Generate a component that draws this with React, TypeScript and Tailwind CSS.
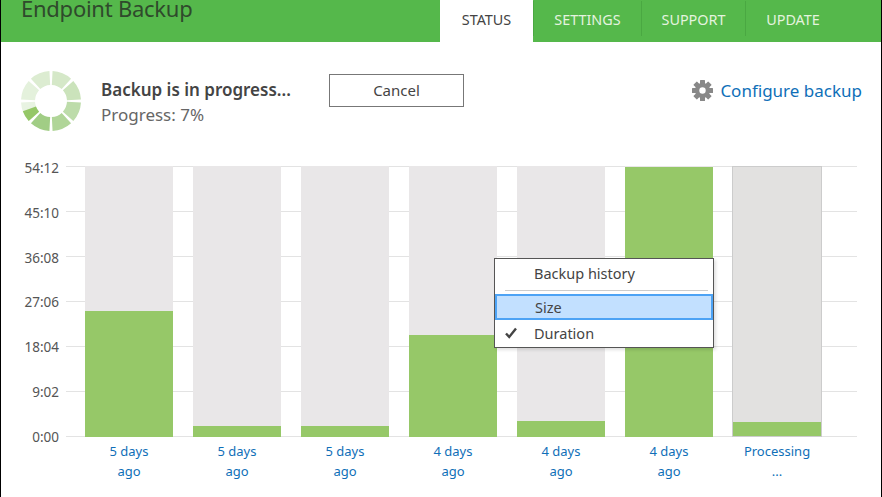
const ticks = ["54:12", "45:10", "36:08", "27:06", "18:04", "9:02", "0:00"];

const bars = [
  { label: ["5 days", "ago"], height: 126 },
  { label: ["5 days", "ago"], height: 11 },
  { label: ["5 days", "ago"], height: 11 },
  { label: ["4 days", "ago"], height: 102 },
  { label: ["4 days", "ago"], height: 16 },
  { label: ["4 days", "ago"], height: 270 },
];

// wedge of the progress ring, angles in degrees clockwise from 12 o'clock
function wedge(a0: number, a1: number, r0: number, r1: number) {
  const pt = (a: number, r: number) => {
    const t = (a * Math.PI) / 180;
    return `${(30 + r * Math.sin(t)).toFixed(2)} ${(30 - r * Math.cos(t)).toFixed(2)}`;
  };
  return `M${pt(a0, r1)} A${r1} ${r1} 0 0 1 ${pt(a1, r1)} L${pt(a1, r0)} A${r0} ${r0} 0 0 0 ${pt(a0, r0)} Z`;
}

const ringColors = ["#d5e8c8", "#cbe3bb", "#bddcaa", "#b0d598", "#a1cd85", "#e8f3e2", "#e4f1dc", "#dcecd1"];

function ProgressRing() {
  return (
    <svg width="60" height="60" viewBox="0 0 60 60" className="shrink-0">
      {ringColors.map((color, i) => (
        <path key={i} d={wedge(i * 45 + 3, (i + 1) * 45 - 3, 16, 30)} fill={color} />
      ))}
      <path d={wedge(225 + 3, 250, 16, 30)} fill="#95c767" />
    </svg>
  );
}

function Gear() {
  return (
    <svg width="21" height="21" viewBox="0 0 21 21" className="shrink-0">
      {[0, 45, 90, 135].map((a) => (
        <rect key={a} x="8" y="0" width="5" height="21" rx="0.5" fill="#888" transform={`rotate(${a} 10.5 10.5)`} />
      ))}
      <circle cx="10.5" cy="10.5" r="7.6" fill="#888" />
      <circle cx="10.5" cy="10.5" r="3.2" fill="#fff" />
    </svg>
  );
}

function Check() {
  return (
    <svg width="12" height="12" viewBox="0 0 12 12" className="absolute left-[10px] top-[7px]">
      <path d="M1 6.5 L4.2 10 L11 1.5" fill="none" stroke="#444" strokeWidth="2.4" />
    </svg>
  );
}

function Tab({ label, width, active }: { label: string; width: string; active?: boolean }) {
  return (
    <div className={`flex h-full items-center justify-center ${width} ${active ? "bg-white text-[#444]" : "text-[#e4f3df]"}`}>
      <span className="pb-[3px] text-[14.4px]">{label}</span>
    </div>
  );
}

export default function App() {
  return (
    <div className="relative h-[497px] w-[882px] overflow-hidden border-x border-black bg-white font-['Noto_Sans',sans-serif] text-[#444]">
      {/* Header */}
      <div className="flex h-[42px] items-start justify-between bg-[#55b84b]">
        <div className="ml-[20px] text-[22px] leading-[17px] tracking-[-0.25px] text-[#2f4a2c]">Endpoint Backup</div>
        <div className="flex h-full">
          <Tab label="STATUS" width="w-[93px]" active />
          <div className="mt-px h-[35px] w-px bg-[#4aa842]" />
          <Tab label="SETTINGS" width="w-[107px]" />
          <div className="mt-px h-[35px] w-px bg-[#4aa842]" />
          <Tab label="SUPPORT" width="w-[103px]" />
          <div className="mt-px h-[35px] w-px bg-[#4aa842]" />
          <Tab label="UPDATE" width="w-[94px]" />
          <div className="w-[41px]" />
        </div>
      </div>

      {/* Status row */}
      <div className="flex h-[124px] items-start pl-[20px] pr-[19px] pt-[29px]">
        <ProgressRing />
        <div className="ml-[20px] w-[228px] pt-[7px]">
          <div className="text-[17px] font-semibold leading-[24px]">Backup is in progress...</div>
          <div className="text-[17px] leading-[26px] text-[#666]">Progress: 7%</div>
        </div>
        <button className="mt-[3px] h-[33px] w-[135px] border border-[#777] text-[15px] text-[#444]">Cancel</button>
        <div className="ml-auto mt-[8px] flex items-center gap-[7px]">
          <div className="-mt-[1px]">
            <Gear />
          </div>
          <span className="text-[17px] leading-[24px] text-[#0f6fb8]">Configure backup</span>
        </div>
      </div>

      {/* Chart */}
      <div className="flex">
        <div className="flex h-[271px] w-[58px] flex-col justify-between pt-[2px] text-right text-[13.5px] text-[#555]">
          {ticks.map((t) => (
            <div key={t} className="flex h-0 items-center justify-end">
              {t}
            </div>
          ))}
        </div>
        <div className="ml-[7px] w-[791px]">
          <div className="relative h-[271px]">
            <div className="absolute inset-0 flex flex-col justify-between">
              {ticks.map((t) => (
                <div key={t} className="h-px bg-[#e3e3e3]" />
              ))}
            </div>
            <div className="relative flex h-full items-end gap-5 pl-[19px]">
              {bars.map((b, i) => (
                <div key={i} className="flex h-full w-[88px] flex-col justify-end bg-[#e9e7e8]">
                  <div className="bg-[#96c868]" style={{ height: b.height }} />
                </div>
              ))}
              <div className="-ml-px flex h-full w-[90px] flex-col justify-end border border-[#ccc] bg-[#e2e1e0]">
                <div className="h-[14px] bg-[#96c868]" />
              </div>
            </div>
          </div>
          <div className="flex gap-5 pl-[19px] pt-[5px] text-center text-[13px] leading-[19.5px] text-[#0f6fb8]">
            {bars.map((b, i) => (
              <div key={i} className="w-[88px]">
                {b.label[0]}
                <br />
                {b.label[1]}
              </div>
            ))}
            <div className="-ml-px w-[90px]">
              Processing
              <br />
              ...
            </div>
          </div>
        </div>
      </div>

      {/* Context menu */}
      <div className="absolute left-[493px] top-[258px] h-[90px] w-[220px] border border-[#555] bg-white text-[14.5px] text-[#444] shadow-[2px_2px_3px_rgba(0,0,0,0.12)]">
        <div className="h-[31px] pl-[39px] pt-[3px] leading-[22px]">Backup history</div>
        <div className="ml-[10px] mr-[5px] h-px bg-[#ccc]" />
        <div className="mt-[3px] h-[26px] border-2 border-[#4da3f5] bg-[#c2e0ff] pl-[38px] leading-[22px]">Size</div>
        <div className="relative h-[27px] pl-[39px] leading-[27px]">
          <Check />
          Duration
        </div>
      </div>
    </div>
  );
}
